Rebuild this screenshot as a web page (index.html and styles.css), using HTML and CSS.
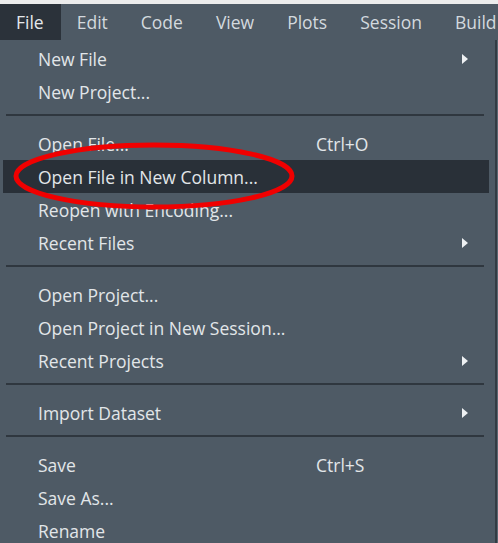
FILE: index.html
```html
<!DOCTYPE html>
<html>

<head>
    <meta http-equiv="Content-Type" content="text/html; charset=utf-8" />
    <title>File menu</title>
    <link rel="stylesheet" href="styles.css">
</head>

<body>
    <div class="topline"></div>
    <div class="menubar">
        <span class="mb-item active">File</span>
        <span class="mb-item">Edit</span>
        <span class="mb-item">Code</span>
        <span class="mb-item">View</span>
        <span class="mb-item">Plots</span>
        <span class="mb-item">Session</span>
        <span class="mb-item">Build</span>
    </div>
    <div class="stage">
        <div class="dropdown">
            <div class="item"><span>New File</span><span></span><span class="arrow"></span></div>
            <div class="item"><span>New Project...</span></div>
            <div class="sep"></div>
            <div class="item"><span>Open File...</span><span class="key">Ctrl+O</span></div>
            <div class="item hover"><span>Open File in New Column...</span></div>
            <div class="item"><span>Reopen with Encoding...</span></div>
            <div class="item"><span>Recent Files</span><span></span><span class="arrow"></span></div>
            <div class="sep"></div>
            <div class="item"><span>Open Project...</span></div>
            <div class="item"><span>Open Project in New Session...</span></div>
            <div class="item"><span>Recent Projects</span><span></span><span class="arrow"></span></div>
            <div class="sep"></div>
            <div class="item"><span>Import Dataset</span><span></span><span class="arrow"></span></div>
            <div class="sep"></div>
            <div class="item"><span>Save</span><span class="key">Ctrl+S</span></div>
            <div class="item"><span>Save As...</span></div>
            <div class="item"><span>Rename</span></div>
        </div>
        <div class="behind"></div>

        <!-- red marker drawn over the menu -->
        <svg class="marker" width="300" height="74" viewBox="0 0 300 74">
            <ellipse cx="141" cy="35" rx="138" ry="31" fill="none" stroke="#f00000" stroke-width="5" />
        </svg>
    </div>
</body>

</html>
```

FILE: styles.css
```css
html,
body {
    margin: 0;
    padding: 0;
    width: 100%;
    height: 100%;
    overflow: hidden;
    background-color: #4e5a65;
    font-family: "Open Sans", "Noto Sans", sans-serif;
    font-size: 17.5px;
}

.topline {
    height: 4px;
    background-color: #ececec;
}

.menubar {
    display: flex;
    height: 36px;
    align-items: stretch;
    background-color: #4e5a65;
    white-space: nowrap;
}

.mb-item {
    display: flex;
    align-items: center;
    padding: 0 17px 0 16px;
    color: #d3d9de;
}

.mb-item.active {
    background-color: #2b323a;
    color: #e4e8eb;
}

.stage {
    position: relative;
    display: flex;
}

.dropdown {
    width: 486px;
    padding: 2px 6px 0 3px;
    border-right: 2px solid #333c44;
    background-color: #4e5a65;
}

.behind {
    flex: 1;
    background-color: #5a6671;
}

.item {
    display: grid;
    grid-template-columns: 278px 1fr 8px;
    align-items: center;
    height: 33px;
    padding: 0 19px 0 35px;
    color: #e2e6e9;
    white-space: nowrap;
}

.item.hover {
    background-color: #293038;
}

.key {
    color: #e2e6e9;
}

.arrow {
    width: 0;
    height: 0;
    border-top: 5px solid transparent;
    border-bottom: 5px solid transparent;
    border-left: 6px solid #eef1f3;
}

.sep {
    height: 2px;
    margin: 6px 5px 11px 3px;
    background-color: #2f373f;
}

.marker {
    position: absolute;
    left: 13px;
    top: 101px;
}
```
